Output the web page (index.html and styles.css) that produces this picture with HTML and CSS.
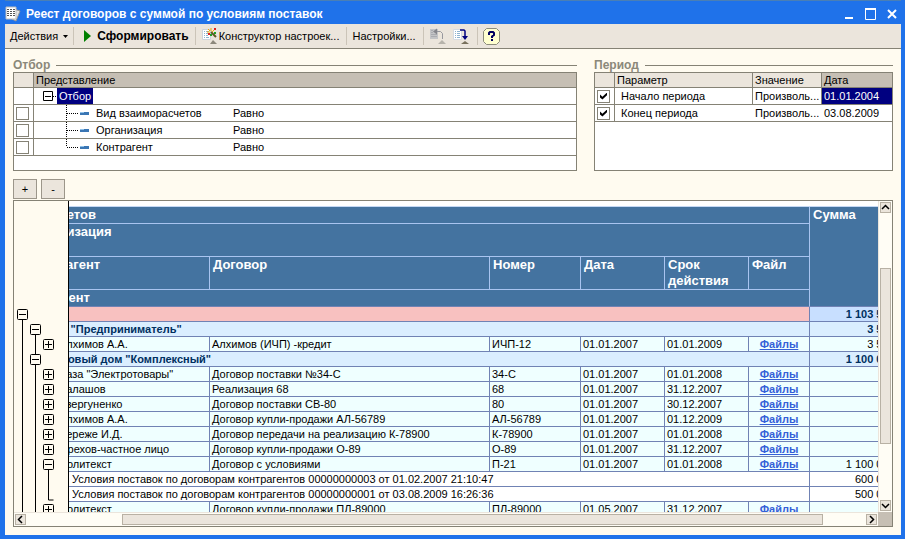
FILE: index.html
```
<!DOCTYPE html>
<html lang="ru">
<head>
    <meta charset="UTF-8">
    <meta name="viewport" content="width=device-width, initial-scale=1.0">
    <title>Реест договоров с суммой по условиям поставок</title>
    <link rel="stylesheet" href="styles.css">
</head>
<body>
    <header class="titlebar">
        <svg width="16" height="17" viewBox="0 0 16 17">
            <path d="M9 3l6 2-4 10-4-2z" fill="#e4e4e4" stroke="#999" stroke-width="1"/>
            <path d="M1 1h10v12H1z" fill="#fff" stroke="#bbb"/>
            <path d="M2 3.500h2M5 3.500h2M8 3.500h2M2 5.500h2M5 5.500h2M8 5.500h2M2 7.500h2M5 7.500h2M8 7.500h2M2 9.500h2M5 9.500h2M8 9.500h2" stroke="#555"/>
        </svg>
        <h1>Реест договоров с суммой по условиям поставок</h1>
        <div class="window-buttons">
            <button type="button" aria-label="Свернуть"><svg width="12" height="12"><path d="M1 10h8" stroke="#fff" stroke-width="2"/></svg></button>
            <button type="button" aria-label="Развернуть"><svg width="12" height="12"><path d="M.5 1v10.500h10V1" fill="none" stroke="#fff"/><path d="M0 1h11" stroke="#fff" stroke-width="2"/></svg></button>
            <button type="button" aria-label="Закрыть"><svg width="12" height="12"><path d="M2 2l8 8M10 2l-8 8" stroke="#fff" stroke-width="2"/></svg></button>
        </div>
    </header>

    <nav class="toolbar">
        <button type="button">Действия <svg width="5" height="3"><path d="M0 0h5L2.500 3z"/></svg></button>
        <span class="sep"></span>
        <button type="button" class="run"><svg width="7" height="12"><path d="M0 0l7 6-7 6z" fill="#008000"/></svg>Сформировать</button>
        <span class="sep"></span>
        <button type="button" class="wizard">
            <svg width="17" height="17" viewBox="0 0 17 17">
                <path d="M1.500 1.500h8v10h-8z" fill="#fff" stroke="#ccd3dc"/>
                <path d="M3 3.500h1M5 3.500h3M3 5.500h1M5 5.500h3M3 7.500h1M5 7.500h2M3 9.500h1M5 9.500h3" stroke="#8fb3d0"/>
                <path d="M10 4l5 5" stroke="#5c5c20" stroke-width="2"/>
                <path d="M6 4h3M10 0v3M13 2l-2 2M7 1l2 2" stroke="#f0a800"/>
                <path d="M13 1h2M7 6h2" stroke="#e02020" stroke-width="2"/>
                <path d="M13 5h2M9 7h2" stroke="#20a020" stroke-width="2"/>
                <path d="M9 16l3-4 4 4z" fill="#8c887c"/>
            </svg>Конструктор настроек...</button>
        <span class="sep"></span>
        <button type="button" class="options">Настройки...</button>
        <span class="sep"></span>
        <button type="button" class="icon" aria-label="Загрузить настройки">
            <svg width="17" height="17" viewBox="0 0 17 17">
                <path d="M1 1h8v10H1z" fill="#c3c4c6"/>
                <path d="M2 2.500h2M2 4.500h2M2 6.500h6M2 8.500h6" stroke="#aaabb0"/>
                <path d="M6 3.500h5.500l2 2V11" fill="none" stroke="#97989e"/>
                <path d="M4 3.500l4-3v6z" fill="#85868c"/>
                <path d="M9 16l4-4 4 4z" fill="#b6b3ab"/>
            </svg>
        </button>
        <button type="button" class="icon" aria-label="Сохранить настройки">
            <svg width="17" height="17" viewBox="0 0 17 17">
                <path d="M1.500 1.500h8v10h-8z" fill="#fff" stroke="#d5dae2"/>
                <path d="M3 3.500h1M5 3.500h3M3 5.500h1M5 5.500h3M3 7.500h1M5 7.500h3M3 9.500h1M5 9.500h3" stroke="#8fb3d0"/>
                <path d="M8 2h4l1 1v6" fill="none" stroke="#000080" stroke-width="1.500"/>
                <path d="M10 8h6l-3 4z" fill="#000080"/>
                <path d="M9 16l4-3 4 3z" fill="#77705c"/>
            </svg>
        </button>
        <span class="sep"></span>
        <button type="button" class="icon" aria-label="Справка">
            <svg width="17" height="17" viewBox="0 0 17 17">
                <path d="M3.500.5h10l3 3v10l-3 3h-10l-3-3v-10z" fill="#ffffd0" stroke="#8c8c7c"/>
                <path d="M6 7V5l1-1h3l1 1v2L9 8.500V10" fill="none" stroke="#000060" stroke-width="2"/>
                <path d="M8 11h2v2H8z" fill="#000060"/>
            </svg>
        </button>
    </nav>

    <main>
        <div class="settings">
            <section class="filter">
                <h2>Отбор</h2>
                <div class="grid-box">
                    <table class="grid">
                        <colgroup><col class="c-check"><col class="c-tree"><col></colgroup>
                        <tr><th></th><th class="active" colspan="2">Представление</th></tr>
                        <tr>
                            <td></td>
                            <td colspan="2" class="root"><svg width="23" height="16"><path d="M9.500 3.500h9v9h-9zM11 8.500h6" fill="none" stroke="#000"/><path d="M19 8.500h4" stroke="#000" stroke-dasharray="1 1"/></svg><span class="selected">Отбор</span></td>
                        </tr>
                        <tr>
                            <td><input type="checkbox" id="f1"></td>
                            <td><svg width="62" height="16"><use href="#branch"/></svg><label for="f1">Вид взаиморасчетов</label></td>
                            <td>Равно</td>
                        </tr>
                        <tr>
                            <td><input type="checkbox" id="f2"></td>
                            <td><svg width="62" height="16"><use href="#branch"/></svg><label for="f2">Организация</label></td>
                            <td>Равно</td>
                        </tr>
                        <tr>
                            <td><input type="checkbox" id="f3"></td>
                            <td><svg width="62" height="16"><use href="#branch-end"/></svg><label for="f3">Контрагент</label></td>
                            <td>Равно</td>
                        </tr>
                    </table>
                </div>
            </section>

            <section class="period">
                <h2>Период</h2>
                <div class="grid-box">
                    <table class="grid">
                        <colgroup><col class="c-check"><col><col class="c-value"><col class="c-date"></colgroup>
                        <tr><th></th><th>Параметр</th><th>Значение</th><th class="active">Дата</th></tr>
                        <tr class="split">
                            <td><input type="checkbox" id="p1" checked></td>
                            <td class="param"><label for="p1">Начало периода</label></td>
                            <td>Произволь...</td>
                            <td class="selected">01.01.2004</td>
                        </tr>
                        <tr>
                            <td><input type="checkbox" id="p2" checked></td>
                            <td class="param"><label for="p2">Конец периода</label></td>
                            <td>Произволь...</td>
                            <td>03.08.2009</td>
                        </tr>
                    </table>
                </div>
            </section>
        </div>

        <div class="levels">
            <button type="button">+</button>
            <button type="button">-</button>
        </div>

        <div class="report">
            <div class="view">
                <div class="outline">
                    <svg width="54" height="330">
                        <defs>
                            <g id="minus"><rect x="0.500" y="0.500" width="10" height="10" rx="1" fill="#fffbf0" stroke="#000"/><path d="M2 5.500h7" stroke="#000"/></g>
                            <g id="plus"><use href="#minus"/><path d="M5.500 2v7" stroke="#000"/></g>
                            <g id="dash"><path d="M46 7h9v3h-9z" fill="#3a76b4"/><path d="M46 7h4v1h-4z" fill="#8fc0e8"/></g>
                            <g id="branch"><path d="M32.500 0v16M33 8.500h11" stroke="#000" stroke-dasharray="1 1"/><use href="#dash"/></g>
                            <g id="branch-end"><path d="M32.500 0v8M33 8.500h11" stroke="#000" stroke-dasharray="1 1"/><use href="#dash"/></g>
                        </defs>
                        <path d="M8.500 119v211M21.500 134v21h5M21.500 164v166M34.500 269v30h5" fill="none" stroke="#000"/>
                        <use href="#minus" x="3" y="108"/>
                        <use href="#minus" x="16" y="123"/>
                        <use href="#plus" x="29" y="138"/>
                        <use href="#minus" x="16" y="153"/>
                        <use href="#plus" x="29" y="168"/>
                        <use href="#plus" x="29" y="183"/>
                        <use href="#plus" x="29" y="198"/>
                        <use href="#plus" x="29" y="213"/>
                        <use href="#plus" x="29" y="228"/>
                        <use href="#plus" x="29" y="243"/>
                        <use href="#minus" x="29" y="258"/>
                        <use href="#plus" x="29" y="303"/>
                    </svg>
                </div>
                <div class="sheet">
                    <table>
                        <colgroup>
                            <col class="w-agent"><col class="w-contract"><col class="w-number"><col class="w-day"><col class="w-day"><col class="w-file"><col class="w-sum">
                        </colgroup>
                        <thead>
                            <tr><th colspan="6" class="l0">Вид взаиморасчетов</th><th rowspan="4" class="total">Сумма</th></tr>
                            <tr class="tall"><th colspan="6" class="l1">Организация</th></tr>
                            <tr class="tall"><th class="l1">Контрагент</th><th>Договор</th><th>Номер</th><th>Дата</th><th>Срок действия</th><th>Файл</th></tr>
                            <tr class="last"><th colspan="6" class="l1">Документ</th></tr>
                        </thead>
                        <tbody>
                            <tr class="kind"><td colspan="6"></td><td>1 103 500,00</td></tr>
                            <tr class="org"><td colspan="6">ИЧП "Предприниматель"</td><td>3 500,00</td></tr>
                            <tr><td>Алхимов А.А.</td><td>Алхимов (ИЧП) -кредит</td><td>ИЧП-12</td><td>01.01.2007</td><td>01.01.2009</td><td><a href="#">Файлы</a></td><td>3 500,00</td></tr>
                            <tr class="org"><td colspan="6">Торговый дом "Комплексный"</td><td>1 100 000,00</td></tr>
                            <tr><td>База "Электротовары"</td><td>Договор поставки №34-С</td><td>34-С</td><td>01.01.2007</td><td>01.01.2008</td><td><a href="#">Файлы</a></td><td></td></tr>
                            <tr><td>Балашов</td><td>Реализация 68</td><td>68</td><td>01.01.2007</td><td>31.12.2007</td><td><a href="#">Файлы</a></td><td></td></tr>
                            <tr><td>Звергуненко</td><td>Договор поставки СВ-80</td><td>80</td><td>01.01.2007</td><td>30.12.2007</td><td><a href="#">Файлы</a></td><td></td></tr>
                            <tr><td>Алхимов А.А.</td><td>Договор купли-продажи АЛ-56789</td><td>АЛ-56789</td><td>01.01.2007</td><td>01.12.2009</td><td><a href="#">Файлы</a></td><td></td></tr>
                            <tr><td>Береже И.Д.</td><td>Договор передачи на реализацию К-78900</td><td>К-78900</td><td>01.01.2007</td><td>01.01.2008</td><td><a href="#">Файлы</a></td><td></td></tr>
                            <tr><td>Орехов-частное лицо</td><td>Договор купли-продажи О-89</td><td>О-89</td><td>01.01.2007</td><td>31.12.2007</td><td><a href="#">Файлы</a></td><td></td></tr>
                            <tr><td>Политекст</td><td>Договор с условиями</td><td>П-21</td><td>01.01.2007</td><td>01.01.2008</td><td><a href="#">Файлы</a></td><td>1 100 000,00</td></tr>
                            <tr class="doc"><td colspan="6">Условия поставок по договорам контрагентов 00000000003 от 01.02.2007 21:10:47</td><td>600 000,00</td></tr>
                            <tr class="doc"><td colspan="6">Условия поставок по договорам контрагентов 00000000001 от 03.08.2009 16:26:36</td><td>500 000,00</td></tr>
                            <tr><td>Политекст</td><td>Договор купли-продажи ПЛ-89000</td><td>ПЛ-89000</td><td>01.05.2007</td><td>31.12.2007</td><td><a href="#">Файлы</a></td><td></td></tr>
                        </tbody>
                    </table>
                </div>
            </div>
            <div class="scroll vertical">
                <button type="button" aria-label="Вверх"><svg width="9" height="9"><path d="M1 6l3.500-3.500L8 6" fill="none" stroke="#000" stroke-width="1.500"/></svg></button>
                <div class="track"><div class="thumb"></div></div>
                <button type="button" aria-label="Вниз"><svg width="9" height="9"><path d="M1 3l3.500 3.500L8 3" fill="none" stroke="#000" stroke-width="1.500"/></svg></button>
            </div>
            <div class="scroll horizontal">
                <button type="button" aria-label="Влево"><svg width="9" height="9"><path d="M6 1L2.500 4.500L6 8" fill="none" stroke="#000" stroke-width="1.500"/></svg></button>
                <div class="track"><div class="thumb"></div></div>
                <button type="button" aria-label="Вправо"><svg width="9" height="9"><path d="M3 1l3.500 3.500L3 8" fill="none" stroke="#000" stroke-width="1.500"/></svg></button>
            </div>
            <div class="corner"></div>
        </div>
    </main>
</body>
</html>
```
FILE: styles.css
```
* {
    box-sizing: border-box;
}
body {
    margin: 0;
    height: 100vh;
    display: flex;
    flex-direction: column;
    background-color: #fffbf0;
    border: solid #1f72ea;
    border-width: 0 4px 4px 5px;
    font: 11px/14px "Liberation Sans", Arial, sans-serif;
    color: #000;
}
button {
    font: inherit;
    color: inherit;
    margin: 0;
    padding: 0;
    border: none;
    background: none;
}
svg {
    display: block;
}
table {
    table-layout: fixed;
    border-collapse: separate;
    border-spacing: 0;
}
td, th {
    padding: 0;
    text-align: left;
    white-space: nowrap;
    overflow: hidden;
}

/* title */
.titlebar {
    flex: none;
    display: flex;
    align-items: center;
    gap: 5px;
    height: 24px;
    padding-top: 3px;
    background-color: #1f72ea;
    border-top: 1px solid #4a7fb5;
    color: #fff;
}
.titlebar h1 {
    margin: 0;
    font-size: 12px;
    font-weight: bold;
}
.window-buttons {
    display: flex;
    gap: 9px;
    margin-left: auto;
    padding-right: 3px;
}

/* toolbar */
.toolbar {
    flex: none;
    display: flex;
    align-items: center;
    height: 25px;
    padding-left: 5px;
    background-color: #ebe5dc;
    border-bottom: 1px solid #858275;
}
.toolbar button {
    display: flex;
    align-items: center;
    gap: 5px;
}
.toolbar .run {
    gap: 6px;
    padding: 0 1px 0 5px;
    font-size: 12px;
    font-weight: bold;
}
.toolbar .wizard {
    gap: 1px;
    padding-right: 2px;
}
.toolbar .options {
    padding-right: 2px;
}
.toolbar .icon {
    padding: 0 3px;
}
.toolbar .sep + .icon {
    padding-left: 0;
}
.sep {
    width: 1px;
    height: 18px;
    margin: 0 5px;
    background-color: #cbc4b8;
}

main {
    flex: 1;
    min-height: 0;
    display: flex;
    flex-direction: column;
    padding: 9px 8px 8px;
}

/* filter and period */
.settings {
    flex: none;
    display: flex;
    gap: 17px;
}
.filter {
    flex: 1;
}
.period {
    width: 299px;
}
h2 {
    display: flex;
    align-items: center;
    gap: 6px;
    margin: 0;
    font-size: 12px;
    color: #8b887a;
}
h2::after {
    content: "";
    flex: 1;
    height: 1px;
    background-color: #858275;
}
.grid-box {
    height: 99px;
    border: 1px solid #858275;
    background-color: #fff;
}
.grid {
    width: 100%;
}
.grid th, .grid td {
    height: 17px;
    padding-left: 2px;
    border-bottom: 1px solid #858275;
    font-weight: normal;
}
.grid th {
    height: 15px;
    line-height: 14px;
    background-color: #ebe5dc;
    border-right: 1px solid #858275;
}
.grid .active {
    background-color: #c6bfb4;
}
.grid td:first-child, .grid .split td {
    border-right: 1px solid #858275;
}
.grid th:last-child, .grid td:last-child {
    border-right: none;
}
.grid td:first-child {
    padding-left: 2px;
}
.grid td svg {
    float: left;
}
.filter td:nth-child(2) {
    padding-left: 0;
}
.filter label, .root .selected {
    line-height: 16px;
}
.root .selected {
    display: inline-block;
    padding: 0 2px;
}
.selected {
    background-color: #000080;
    color: #fff;
}
.grid td.param {
    padding-left: 6px;
}
.c-check {
    width: 20px;
}
.c-tree {
    width: 197px;
}
.c-value {
    width: 69px;
}
.c-date {
    width: 70px;
}
input[type="checkbox"] {
    appearance: none;
    display: block;
    width: 13px;
    height: 13px;
    margin: 0;
    border: 1px solid #858275;
    background-color: #fff;
}
input[type="checkbox"]:checked::before {
    content: "";
    display: block;
    width: 7px;
    height: 7px;
    margin: 2px;
    background-color: #000;
    clip-path: polygon(0 30%, 35% 60%, 100% 0, 100% 38%, 35% 100%, 0 70%);
}

.levels {
    flex: none;
    display: flex;
    gap: 4px;
    margin: 8px 0 1px;
}
.levels button {
    width: 24px;
    height: 20px;
    border: 1px solid #9c968a;
    background-color: #ebe5dc;
}

/* report */
.report {
    flex: 1;
    min-height: 0;
    display: grid;
    grid-template: minmax(0, 1fr) 14px / minmax(0, 1fr) 14px;
    border: 1px solid #858275;
}
.view {
    display: flex;
    min-height: 0;
    overflow: hidden;
}
.outline {
    flex: none;
    width: 55px;
    border-right: 1px solid #000;
    overflow: hidden;
}
.sheet {
    flex: 1;
    min-width: 0;
    padding-top: 5px;
    background-color: #fff;
    overflow: hidden;
}
/* scrolled to the right, so the first column starts off screen */
.sheet table {
    width: 964px;
    margin-left: -120px;
    border-top: 1px solid #c4d8f4;
}
.w-agent { width: 261px; }
.w-contract { width: 280px; }
.w-number { width: 91px; }
.w-day { width: 84px; }
.w-file { width: 61px; }
.w-sum { width: 103px; }

.sheet th {
    height: 17px;
    padding: 0 3px;
    border: solid #a9c4f0;
    border-width: 0 1px 1px 0;
    background-color: #4473a0;
    color: #fff;
    font-size: 13px;
    line-height: 16px;
    vertical-align: top;
    white-space: normal;
}
.sheet .tall th {
    height: 33px;
}
.sheet .last th, .sheet .total {
    border-bottom-color: #7082b4;
}
.sheet .l0 {
    padding-left: 12px;
}
.sheet .l1 {
    padding-left: 79px;
}
.sheet td {
    height: 15px;
    padding: 0 2px;
    border: solid #7082b4;
    border-width: 0 1px 1px 0;
    background-color: #efffff;
}
.sheet td:first-child {
    padding-left: 110px;
}
.sheet td:nth-child(6) {
    text-align: center;
}
.sheet td:last-child {
    text-align: right;
}
.sheet .kind td, .sheet .org td {
    background-color: #daeeff;
    color: #003060;
    font-weight: bold;
}
.sheet .kind td {
    background-color: #c8dfff;
}
.sheet .kind td:first-child {
    background-color: #f8c1c0;
}
.sheet .org td:first-child {
    padding-left: 95px;
}
.sheet .doc td {
    background-color: #fff;
}
.sheet .doc td:first-child {
    padding-left: 123px;
}
.sheet a {
    color: #3560d8;
    font-weight: bold;
}

/* scrollbars */
.scroll {
    display: flex;
    padding: 1px;
    background-color: #fffdf5;
}
.vertical {
    flex-direction: column;
    border-left: 1px solid #ebe5dc;
}
.horizontal {
    border-top: 1px solid #ebe5dc;
}
.scroll button {
    flex: none;
    width: 11px;
    height: 11px;
    border: 1px solid #b8b1a4;
    background-color: #ebe5dc;
}
.track {
    flex: 1;
    display: flex;
}
.vertical .track {
    flex-direction: column;
}
.track::before, .track::after {
    content: "";
}
.thumb {
    border: 1px solid #b8b1a4;
    background-color: #ebe5dc;
}
.vertical .track::before { flex: 56; }
.vertical .thumb { flex: 175; }
.vertical .track::after { flex: 57; }
.horizontal .track::before { flex: 96; }
.horizontal .thumb { flex: 702; }
.horizontal .track::after { flex: 43; }
.corner {
    background-color: #c6bfb4;
}
```
